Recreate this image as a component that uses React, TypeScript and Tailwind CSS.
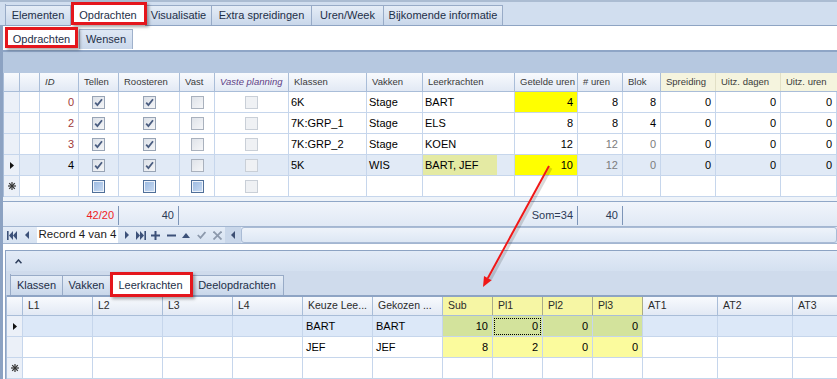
import React from "react";

type Kind = "on" | "off" | "dis" | "new";

function Check({ kind }: { kind: Kind }) {
  if (kind === "new")
    return (
      <span className="flex w-[13px] h-[13px] border border-[#4f6f99] bg-[#eef3fa] p-[1px]">
        <span className="flex-1 bg-linear-to-br from-[#9dbbe2] to-[#c6d9f1]" />
      </span>
    );
  const box =
    kind === "dis"
      ? "border-[#c9cfd7] bg-[#eff1f4]"
      : kind === "off"
        ? "border-[#a9b1bd] bg-linear-to-br from-[#dfe3e9] to-[#f5f6f8]"
        : "border-[#98a4b5] bg-linear-to-br from-[#dce1e8] to-[#f4f5f7]";
  return (
    <span className={`flex items-center justify-center w-[13px] h-[13px] border ${box}`}>
      {kind === "on" && (
        <svg width="9" height="9" viewBox="0 0 9 9">
          <path d="M1.2 4.6 L3.4 7 L8 1.2" fill="none" stroke="#4a5d80" strokeWidth="1.8" />
        </svg>
      )}
    </span>
  );
}

function RowArrow() {
  return (
    <svg width="4" height="7" viewBox="0 0 4 7">
      <polygon points="0,0 4,3.5 0,7" fill="#111" />
    </svg>
  );
}

function NewRowStar() {
  return (
    <svg width="8" height="8" viewBox="0 0 8 8" stroke="#333" strokeWidth="1.2">
      <line x1="4" y1="0" x2="4" y2="8" />
      <line x1="0" y1="4" x2="8" y2="4" />
      <line x1="1.2" y1="1.2" x2="6.8" y2="6.8" />
      <line x1="6.8" y1="1.2" x2="1.2" y2="6.8" />
    </svg>
  );
}

function RedBox({ className }: { className: string }) {
  return (
    <span
      className={`pointer-events-none absolute z-10 border-[3px] border-[#e4161c] shadow-[2px_2px_3px_rgba(0,0,0,0.35)] ${className}`}
    />
  );
}

function Cell({ w, className = "", children }: { w: string; className?: string; children?: React.ReactNode }) {
  return (
    <div className={`${w} shrink-0 h-full flex items-center border-r border-[#c6d6ec] overflow-hidden whitespace-nowrap ${className}`}>
      {children}
    </div>
  );
}

function HeadCell({ w, className = "", children }: { w: string; className?: string; children?: React.ReactNode }) {
  return (
    <div
      className={`${w} shrink-0 h-full flex items-center pl-[5px] border-r overflow-hidden whitespace-nowrap ${className}`}
    >
      {children}
    </div>
  );
}

const headNormal = "border-[#a9bdd8] bg-linear-to-b from-[#f8fafd] to-[#e2e9f4]";
const headBeige = "border-[#e2e0c6] bg-[#f5f4de]";
const headYellow = "border-[#a9ab8a] bg-[#f6f6a4]";

function Tab({ label, w, active }: { label: string; w: string; active?: boolean }) {
  return (
    <div
      className={`${w} relative shrink-0 flex items-center justify-center border-t border-r border-[#98abc7] text-[11px] text-[#1e2f48] whitespace-nowrap ${
        active ? "h-[22px] -mb-px bg-white" : "h-[20px] bg-linear-to-b from-[#e5edf7] to-[#c9d7ea]"
      }`}
    >
      {label}
    </div>
  );
}

function MainTabs() {
  return (
    <div className="h-[26px] bg-[#d1deef] border-t-2 border-[#abbcd2] border-b border-b-[#8ea4c3] flex items-end pl-[5px]">
      <div className="flex items-end border-l border-[#98abc7]">
        <Tab label="Elementen" w="w-[65px]" />
        <div className="relative">
          <Tab label="Opdrachten" w="w-[75px]" active />
          <RedBox className="left-0 -right-px -top-[2px] bottom-0" />
        </div>
        <Tab label="Visualisatie" w="w-[66px]" />
        <Tab label="Extra spreidingen" w="w-[100px]" />
        <Tab label="Uren/Week" w="w-[72px]" />
        <Tab label="Bijkomende informatie" w="w-[119px]" />
      </div>
    </div>
  );
}

function SubTabs() {
  return (
    <div className="h-[24px] bg-white flex items-end pb-[1px] pl-[2px]">
      <div className="relative w-[73px] h-[20px] flex items-center justify-center text-[11px] text-[#1e2f48] bg-white">
        Opdrachten
        <RedBox className="left-0 right-0 -top-[2px] bottom-[1px]" />
      </div>
      <div className="ml-[1px] w-[54px] h-[20px] flex items-center justify-center text-[11px] text-[#1e2f48] border border-b-0 border-[#9fb1cb] bg-linear-to-b from-[#dfe8f5] to-[#cad8eb]">
        Wensen
      </div>
    </div>
  );
}

type TopRow = {
  id: string;
  klas: string;
  vak: string;
  leer: string;
  get: string;
  getY: boolean;
  uren: string;
  blok: string;
  muted: boolean;
  sel?: boolean;
  hlLeer?: boolean;
};

const topRows: TopRow[] = [
  { id: "0", klas: "6K", vak: "Stage", leer: "BART", get: "4", getY: true, uren: "8", blok: "8", muted: false },
  { id: "2", klas: "7K:GRP_1", vak: "Stage", leer: "ELS", get: "8", getY: false, uren: "8", blok: "4", muted: false },
  { id: "3", klas: "7K:GRP_2", vak: "Stage", leer: "KOEN", get: "12", getY: false, uren: "12", blok: "0", muted: true },
  { id: "4", klas: "5K", vak: "WIS", leer: "BART, JEF", get: "10", getY: true, uren: "12", blok: "0", muted: true, sel: true, hlLeer: true },
];

function TopGrid() {
  return (
    <div className="flex flex-col overflow-hidden">
      {/* group band */}
      <div className="h-[23px] border-t-2 border-[#8ea5c6] bg-[#b6c8e0]" />

      <div className="border-l border-[#a9bdd8] text-[11px]">
        {/* column headers */}
        <div className="flex h-[19px] border-b border-[#a9bdd8] text-[9.5px] text-[#3a3a3a]">
          <HeadCell w="w-[16px]" className={headNormal} />
          <HeadCell w="w-[20px]" className={headNormal} />
          <HeadCell w="w-[39px]" className={`${headNormal} italic`}>ID</HeadCell>
          <HeadCell w="w-[40px]" className={headNormal}>Tellen</HeadCell>
          <HeadCell w="w-[61px]" className={headNormal}>Roosteren</HeadCell>
          <HeadCell w="w-[35px]" className={headNormal}>Vast</HeadCell>
          <HeadCell w="w-[74px]" className={`${headNormal} italic text-[#5f3f86]`}>Vaste planning</HeadCell>
          <HeadCell w="w-[78px]" className={headNormal}>Klassen</HeadCell>
          <HeadCell w="w-[56px]" className={headNormal}>Vakken</HeadCell>
          <HeadCell w="w-[92px]" className={headNormal}>Leerkrachten</HeadCell>
          <HeadCell w="w-[63px]" className={headNormal}>Getelde uren</HeadCell>
          <HeadCell w="w-[45px]" className={headNormal}># uren</HeadCell>
          <HeadCell w="w-[38px]" className={headNormal}>Blok</HeadCell>
          <HeadCell w="w-[55px]" className={headBeige}>Spreiding</HeadCell>
          <HeadCell w="w-[65px]" className={headBeige}>Uitz. dagen</HeadCell>
          <HeadCell w="w-[70px]" className={headBeige}>Uitz. uren</HeadCell>
        </div>

        {topRows.map((r) => (
          <div key={r.id} className={`flex h-[21px] border-b border-[#c6d6ec] ${r.sel ? "bg-[#e1eaf6]" : "bg-white"}`}>
            <Cell w="w-[16px]" className="bg-[#ebf0f8] justify-center">{r.sel && <RowArrow />}</Cell>
            <Cell w="w-[20px]" />
            <Cell w="w-[39px]" className={`justify-end pr-[4px] ${r.sel ? "text-black" : "text-[#a03a3a]"}`}>{r.id}</Cell>
            <Cell w="w-[40px]" className="justify-center"><Check kind="on" /></Cell>
            <Cell w="w-[61px]" className="justify-center"><Check kind="on" /></Cell>
            <Cell w="w-[35px]" className="justify-center"><Check kind="off" /></Cell>
            <Cell w="w-[74px]" className="justify-center"><Check kind="dis" /></Cell>
            <Cell w="w-[78px]" className="pl-[2px]">{r.klas}</Cell>
            <Cell w="w-[56px]" className="pl-[2px]">{r.vak}</Cell>
            <Cell w="w-[92px]">
              {r.hlLeer ? (
                <span className="h-full w-[74px] bg-[#e4eaa3] flex items-center pl-[2px]">{r.leer}</span>
              ) : (
                <span className="pl-[2px]">{r.leer}</span>
              )}
            </Cell>
            <Cell w="w-[63px]" className={`justify-end pr-[4px] ${r.getY ? "bg-[#ffff00]" : ""}`}>{r.get}</Cell>
            <Cell w="w-[45px]" className={`justify-end pr-[4px] ${r.muted ? "text-[#7c7c7c]" : ""}`}>{r.uren}</Cell>
            <Cell w="w-[38px]" className={`justify-end pr-[4px] ${r.muted ? "text-[#7c7c7c]" : ""}`}>{r.blok}</Cell>
            <Cell w="w-[55px]" className="justify-end pr-[4px]">0</Cell>
            <Cell w="w-[65px]" className="justify-end pr-[4px]">0</Cell>
            <Cell w="w-[56px]" className="justify-end pr-[4px]">0</Cell>
          </div>
        ))}

        {/* new row */}
        <div className="flex h-[21px] border-b border-[#c6d6ec] bg-white">
          <Cell w="w-[16px]" className="bg-[#ebf0f8] justify-center"><NewRowStar /></Cell>
          <Cell w="w-[20px]" />
          <Cell w="w-[39px]" />
          <Cell w="w-[40px]" className="justify-center"><Check kind="new" /></Cell>
          <Cell w="w-[61px]" className="justify-center"><Check kind="new" /></Cell>
          <Cell w="w-[35px]" className="justify-center"><Check kind="new" /></Cell>
          <Cell w="w-[74px]" className="justify-center"><Check kind="dis" /></Cell>
          <Cell w="w-[78px]" />
          <Cell w="w-[56px]" />
          <Cell w="w-[92px]" />
          <Cell w="w-[63px]" />
          <Cell w="w-[45px]" />
          <Cell w="w-[38px]" />
          <Cell w="w-[55px]" />
          <Cell w="w-[65px]" />
          <Cell w="w-[56px]" />
        </div>
      </div>
    </div>
  );
}

function FootCell({ w, className = "", children }: { w: string; className?: string; children: React.ReactNode }) {
  return (
    <div className={`${w} shrink-0 h-[19px] mb-[1px] border-r border-[#7d95b8] flex items-center justify-end pr-[4px] ${className}`}>
      {children}
    </div>
  );
}

function Footer() {
  return (
    <>
      <div className="h-[4px] bg-[#eef3f9]" />
      <div className="h-[25px] border-t border-[#90a7c7] bg-linear-to-b from-[#f1f5fb] to-[#e0e9f5] flex items-end text-[11px] text-[#2c3a55]">
        <FootCell w="w-[116px]" className="text-[#ee1c25]">42/20</FootCell>
        <FootCell w="w-[60px]">40</FootCell>
        <div className="w-[338px] shrink-0" />
        <FootCell w="w-[61px]">Som=34</FootCell>
        <FootCell w="w-[45px]">40</FootCell>
      </div>
    </>
  );
}

function NavBar() {
  const ic = "#3c5179";
  return (
    <div className="h-[18px] border-y border-[#a3b6d1] bg-linear-to-b from-[#e4ecf7] to-[#d6e2f1] flex">
      <span className="w-[18px] flex items-center justify-center">
        <svg width="10" height="9" viewBox="0 0 10 9" fill={ic}>
          <rect x="0" y="0" width="1.6" height="9" />
          <polygon points="6,0 2,4.5 6,9" />
          <polygon points="10,0 6,4.5 10,9" />
        </svg>
      </span>
      <span className="w-[12px] flex items-center justify-center">
        <svg width="4" height="8" viewBox="0 0 4 8" fill={ic}><polygon points="4,0 0,4 4,8" /></svg>
      </span>
      <span className="ml-[4px] w-[81px] bg-white flex items-center justify-center text-[11.5px] text-[#1b1b1b] whitespace-nowrap">
        Record 4 van 4
      </span>
      <span className="w-[17px] flex items-center justify-center">
        <svg width="4" height="8" viewBox="0 0 4 8" fill={ic}><polygon points="0,0 4,4 0,8" /></svg>
      </span>
      <span className="w-[12px] flex items-center justify-center">
        <svg width="10" height="9" viewBox="0 0 10 9" fill={ic}>
          <polygon points="0,0 4,4.5 0,9" />
          <polygon points="4,0 8,4.5 4,9" />
          <rect x="8.4" y="0" width="1.6" height="9" />
        </svg>
      </span>
      <span className="w-[17px] flex items-center justify-center">
        <svg width="9" height="9" viewBox="0 0 9 9" stroke={ic} strokeWidth="2"><line x1="4.5" y1="0" x2="4.5" y2="9" /><line x1="0" y1="4.5" x2="9" y2="4.5" /></svg>
      </span>
      <span className="w-[15px] flex items-center justify-center">
        <svg width="9" height="3" viewBox="0 0 9 3" stroke={ic} strokeWidth="2"><line x1="0" y1="1.5" x2="9" y2="1.5" /></svg>
      </span>
      <span className="w-[14px] flex items-center justify-center">
        <svg width="8" height="5" viewBox="0 0 8 5" fill={ic}><polygon points="0,5 4,0 8,5" /></svg>
      </span>
      <span className="w-[16px] flex items-center justify-center">
        <svg width="9" height="8" viewBox="0 0 9 8" fill="none" stroke="#8c99ac" strokeWidth="1.8"><path d="M0.8 4 L3.5 6.8 L8.4 1" /></svg>
      </span>
      <span className="w-[16px] flex items-center justify-center">
        <svg width="9" height="9" viewBox="0 0 9 9" stroke="#8c99ac" strokeWidth="1.8"><line x1="0.5" y1="0.5" x2="8.5" y2="8.5" /><line x1="8.5" y1="0.5" x2="0.5" y2="8.5" /></svg>
      </span>
      <span className="w-[16px] bg-[#c9d7ea] flex items-center justify-center">
        <svg width="4" height="8" viewBox="0 0 4 8" fill="#3d4f73"><polygon points="4,0 0,4 4,8" /></svg>
      </span>
      <span className="flex-1 rounded-[3px] border border-[#a9bbd5] bg-linear-to-b from-[#eef3fa] to-[#dde7f4]" />
    </div>
  );
}

type BotRow = { sel?: boolean; neu?: boolean; k?: string; g?: string; sub?: string; p1?: string; p2?: string; p3?: string; focus?: boolean };

const botRows: BotRow[] = [
  { sel: true, k: "BART", g: "BART", sub: "10", p1: "0", p2: "0", p3: "0", focus: true },
  { k: "JEF", g: "JEF", sub: "8", p1: "2", p2: "0", p3: "0" },
  { neu: true },
];

function DetailPanel() {
  return (
    <div className="ml-[2px] flex-1 border-l border-t border-[#8da3c3] flex flex-col overflow-hidden">
      {/* collapse header */}
      <div className="h-[20px] shrink-0 bg-linear-to-b from-[#e3ebf7] to-[#d4e0f0] flex items-center pl-[9px]">
        <svg width="7" height="5" viewBox="0 0 7 5">
          <path d="M0.5 4.3 L3.5 1 L6.5 4.3" fill="none" stroke="#2f405e" strokeWidth="1.6" />
        </svg>
      </div>

      {/* detail tabs */}
      <div className="h-[24px] shrink-0 bg-[#cfdbec] flex items-end pl-[4px]">
        <div className="flex items-end border-l border-[#98abc7]">
          <Tab label="Klassen" w="w-[52px]" />
          <Tab label="Vakken" w="w-[48px]" />
          <div className="relative">
            <Tab label="Leerkrachten" w="w-[80px]" active />
            <RedBox className="-left-px -right-[2px] -top-[2px] -bottom-[2px]" />
          </div>
          <Tab label="Deelopdrachten" w="w-[93px]" />
        </div>
      </div>

      {/* detail grid */}
      <div className="border-l border-[#a9bdd8] text-[11px]">
        <div className="flex h-[21px] border-t-2 border-[#8ea4c4] border-b border-b-[#a9bdd8] text-[10.5px] text-[#2b2b2b]">
          <HeadCell w="w-[16px]" className={headNormal} />
          <HeadCell w="w-[70px]" className={headNormal}>L1</HeadCell>
          <HeadCell w="w-[70px]" className={headNormal}>L2</HeadCell>
          <HeadCell w="w-[70px]" className={headNormal}>L3</HeadCell>
          <HeadCell w="w-[70px]" className={headNormal}>L4</HeadCell>
          <HeadCell w="w-[70px]" className={`${headNormal} pl-[3px]`}>Keuze Lee...</HeadCell>
          <HeadCell w="w-[70px]" className={`${headNormal} pl-[3px]`}>Gekozen ...</HeadCell>
          <HeadCell w="w-[50px]" className={`${headYellow} pl-[3px]`}>Sub</HeadCell>
          <HeadCell w="w-[50px]" className={`${headYellow} pl-[3px]`}>Pl1</HeadCell>
          <HeadCell w="w-[50px]" className={`${headYellow} pl-[3px]`}>Pl2</HeadCell>
          <HeadCell w="w-[50px]" className={`${headYellow} pl-[3px]`}>Pl3</HeadCell>
          <HeadCell w="w-[75px]" className={`${headNormal} pl-[3px]`}>AT1</HeadCell>
          <HeadCell w="w-[75px]" className={`${headNormal} pl-[3px]`}>AT2</HeadCell>
          <HeadCell w="w-[75px]" className={`${headNormal} pl-[3px]`}>AT3</HeadCell>
        </div>

        {botRows.map((r, i) => {
          const y = r.neu ? "" : r.sel ? "bg-[#d3e39c]" : "bg-[#fbfb9d]";
          return (
            <div key={i} className={`flex h-[21px] border-b border-[#c6d6ec] ${r.sel ? "bg-[#dce8f8]" : "bg-white"}`}>
              <Cell w="w-[16px]" className="bg-[#ebf0f8] justify-center">
                {r.sel && <RowArrow />}
                {r.neu && <NewRowStar />}
              </Cell>
              <Cell w="w-[70px]" />
              <Cell w="w-[70px]" />
              <Cell w="w-[70px]" />
              <Cell w="w-[70px]" />
              <Cell w="w-[70px]" className="pl-[3px]">{r.k}</Cell>
              <Cell w="w-[70px]" className="pl-[3px]">{r.g}</Cell>
              <Cell w="w-[50px]" className={`justify-end pr-[4px] ${y}`}>{r.sub}</Cell>
              <Cell w="w-[50px]" className={`${y}`}>
                {r.focus ? (
                  <span className="m-[1px] h-[17px] flex-1 border border-dotted border-black flex items-center justify-end pr-[2px]">{r.p1}</span>
                ) : (
                  <span className="flex-1 text-right pr-[4px]">{r.p1}</span>
                )}
              </Cell>
              <Cell w="w-[50px]" className={`justify-end pr-[4px] ${y}`}>{r.p2}</Cell>
              <Cell w="w-[50px]" className={`justify-end pr-[4px] ${y}`}>{r.p3}</Cell>
              <Cell w="w-[75px]" />
              <Cell w="w-[75px]" />
              <Cell w="w-[75px]" />
            </div>
          );
        })}
      </div>
    </div>
  );
}

function Arrow() {
  return (
    <svg className="pointer-events-none absolute left-0 top-0 z-20" width="837" height="379" viewBox="0 0 837 379">
      <line x1="551" y1="168" x2="490" y2="280" stroke="rgba(0,0,0,0.15)" strokeWidth="3" />
      <line x1="549" y1="166" x2="487.8" y2="278.2" stroke="#f01818" strokeWidth="2" />
      <polygon points="483,287 491.6,280.3 484,276.1" fill="#f01818" />
    </svg>
  );
}

export default function App() {
  return (
    <div className="relative w-[837px] h-[379px] overflow-hidden bg-white font-['Liberation_Sans',Arial,sans-serif] text-black">
      <MainTabs />
      <div className="flex h-[353px]">
        {/* left edge strip */}
        <div className="w-[3px] shrink-0 bg-[#8ca2c2]" />
        <div className="flex-1 min-w-0 flex flex-col">
          <SubTabs />
          <TopGrid />
          <Footer />
          <NavBar />
          <div className="h-[6px] shrink-0 bg-white" />
          <DetailPanel />
        </div>
      </div>
      <Arrow />
    </div>
  );
}
